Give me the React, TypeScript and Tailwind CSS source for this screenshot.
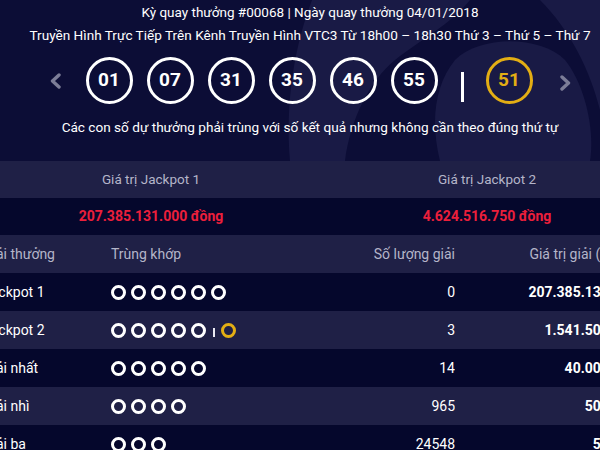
import { Fragment } from "react";

const balls = ["01", "07", "31", "35", "46", "55"];

type PrizeRow = {
  name: string;
  match: number;
  bonus?: boolean;
  count: string;
  value: string;
};

const rows: PrizeRow[] = [
  { name: "Jackpot 1", match: 6, count: "0", value: "207.385.131.000" },
  { name: "Jackpot 2", match: 5, bonus: true, count: "3", value: "1.541.505.583" },
  { name: "Giải nhất", match: 5, count: "14", value: "40.000.000" },
  { name: "Giải nhì", match: 4, count: "965", value: "500.000" },
  { name: "Giải ba", match: 3, count: "24548", value: "50.000" },
];

const Chevron = ({ dir }: { dir: "left" | "right" }) => (
  <svg width="12" height="16" viewBox="0 0 12 16" className="shrink-0">
    <polyline
      points={dir === "left" ? "10,2 3.5,8 10,14" : "2,2 8.5,8 2,14"}
      fill="none"
      stroke="#7c7d97"
      strokeWidth="3.4"
      strokeLinecap="round"
      strokeLinejoin="round"
    />
  </svg>
);

const Ball = ({ num, gold }: { num: string; gold?: boolean }) => (
  <div
    className={
      gold
        ? "w-[47px] h-[47px] rounded-full border-[3px] border-[#e3ae14] text-[#e3ae14] flex items-center justify-center text-[19px] font-bold"
        : "w-[47px] h-[47px] rounded-full border-[3px] border-white text-white flex items-center justify-center text-[19px] font-bold"
    }
  >
    {num}
  </div>
);

const Rings = ({ count, bonus }: { count: number; bonus?: boolean }) => (
  <div className="flex items-center gap-[5px]">
    {Array.from({ length: count }).map((_, i) => (
      <span key={i} className="w-[15px] h-[15px] rounded-full border-[3px] border-white" />
    ))}
    {bonus && (
      <>
        <span className="w-[2px] h-[9px] bg-[#e9e9f2] mt-[5px] ml-[2px]" />
        <span className="w-[15px] h-[15px] rounded-full border-[3px] border-[#e3ae14] ml-[1px]" />
      </>
    )}
  </div>
);

export default function App() {
  return (
    <div className="relative w-[600px] h-[450px] overflow-hidden bg-[#0c0d36] font-['Roboto',sans-serif]">
      {/* background art */}
      <svg width="600" height="161" className="absolute left-0 top-0">
        <path
          d="M312,0 L470,0 C450,25 420,40 395,60 C370,80 350,120 345,161 L290,161 C285,100 295,45 312,0 Z"
          fill="#191a45"
        />
        <path
          d="M455,60 C480,35 540,35 565,60 C585,85 595,130 590,161 L440,161 C430,120 435,85 455,60 Z"
          fill="#191a45"
        />
        <path d="M540,0 L600,0 L600,110 C590,70 570,30 540,0 Z" fill="#191a45" />
      </svg>

      <div className="relative w-[672px] -ml-[17px]">
        {/* draw info */}
        <div className="h-[161px] pr-[18px] pt-[3px] flex flex-col items-center text-white">
          <div className="h-[18px] leading-[18px] text-[13.5px]">
            Kỳ quay thưởng #00068 | Ngày quay thưởng 04/01/2018
          </div>
          <div className="mt-[5px] h-[18px] leading-[18px] text-[13.6px]">
            Truyền Hình Trực Tiếp Trên Kênh Truyền Hình VTC3 Từ 18h00 – 18h30 Thứ 3 – Thứ 5 – Thứ 7
          </div>
          <div className="mt-[13px] h-[47px] flex items-center">
            <Chevron dir="left" />
            <div className="ml-[25px] flex items-center gap-[14px]">
              {balls.map((b) => (
                <Ball key={b} num={b} />
              ))}
            </div>
            <span className="ml-[23px] mr-[22px] mt-[12px] w-[3px] h-[30px] bg-white" />
            <Ball num="51" gold />
            <div className="ml-[27px] mt-[4px]">
              <Chevron dir="right" />
            </div>
          </div>
          <div className="mt-[14px] h-[18px] leading-[18px] text-[13.6px]">
            Các con số dự thưởng phải trùng với số kết quả nhưng không cần theo đúng thứ tự
          </div>
        </div>

        {/* jackpot values */}
        <div className="grid grid-cols-2">
          <div className="h-[37px] bg-[#1f2046] flex items-center justify-center text-[13.5px] text-[#b4b5c9]">
            Giá trị Jackpot 1
          </div>
          <div className="h-[37px] bg-[#1f2046] flex items-center justify-center text-[13.5px] text-[#b4b5c9]">
            Giá trị Jackpot 2
          </div>
          <div className="h-[37px] bg-[#05072c] flex items-center justify-center text-[14px] font-bold text-[#ec1f3b]">
            207.385.131.000 đồng
          </div>
          <div className="h-[37px] bg-[#05072c] flex items-center justify-center text-[14px] font-bold text-[#ec1f3b]">
            4.624.516.750 đồng
          </div>
        </div>

        {/* prize table */}
        <div className="grid grid-cols-[128px_244px_100px_200px]">
          <div className="h-[38px] bg-[#1f2046] flex items-center text-[14px] text-[#b4b5c9]">Giải thưởng</div>
          <div className="h-[38px] bg-[#1f2046] flex items-center text-[14px] text-[#b4b5c9]">Trùng khớp</div>
          <div className="h-[38px] bg-[#1f2046] flex items-center justify-end text-[14px] text-[#b4b5c9]">Số lượng giải</div>
          <div className="h-[38px] bg-[#1f2046] flex items-center justify-end pr-[18px] text-[14px] text-[#b4b5c9]">
            Giá trị giải (đồng)
          </div>
          {rows.map((r, i) => {
            const bg = i % 2 === 0 ? "bg-[#05072c]" : "bg-[#1f2046]";
            return (
              <Fragment key={r.name}>
                <div className={`h-[38px] ${bg} flex items-center text-[14px] text-white`}>{r.name}</div>
                <div className={`h-[38px] ${bg} flex items-center`}>
                  <Rings count={r.match} bonus={r.bonus} />
                </div>
                <div className={`h-[38px] ${bg} flex items-center justify-end text-[14px] text-white`}>{r.count}</div>
                <div className={`h-[38px] ${bg} flex items-center justify-end pr-[18px] text-[14px] font-bold text-white`}>
                  {r.value}
                </div>
              </Fragment>
            );
          })}
        </div>
      </div>
    </div>
  );
}
